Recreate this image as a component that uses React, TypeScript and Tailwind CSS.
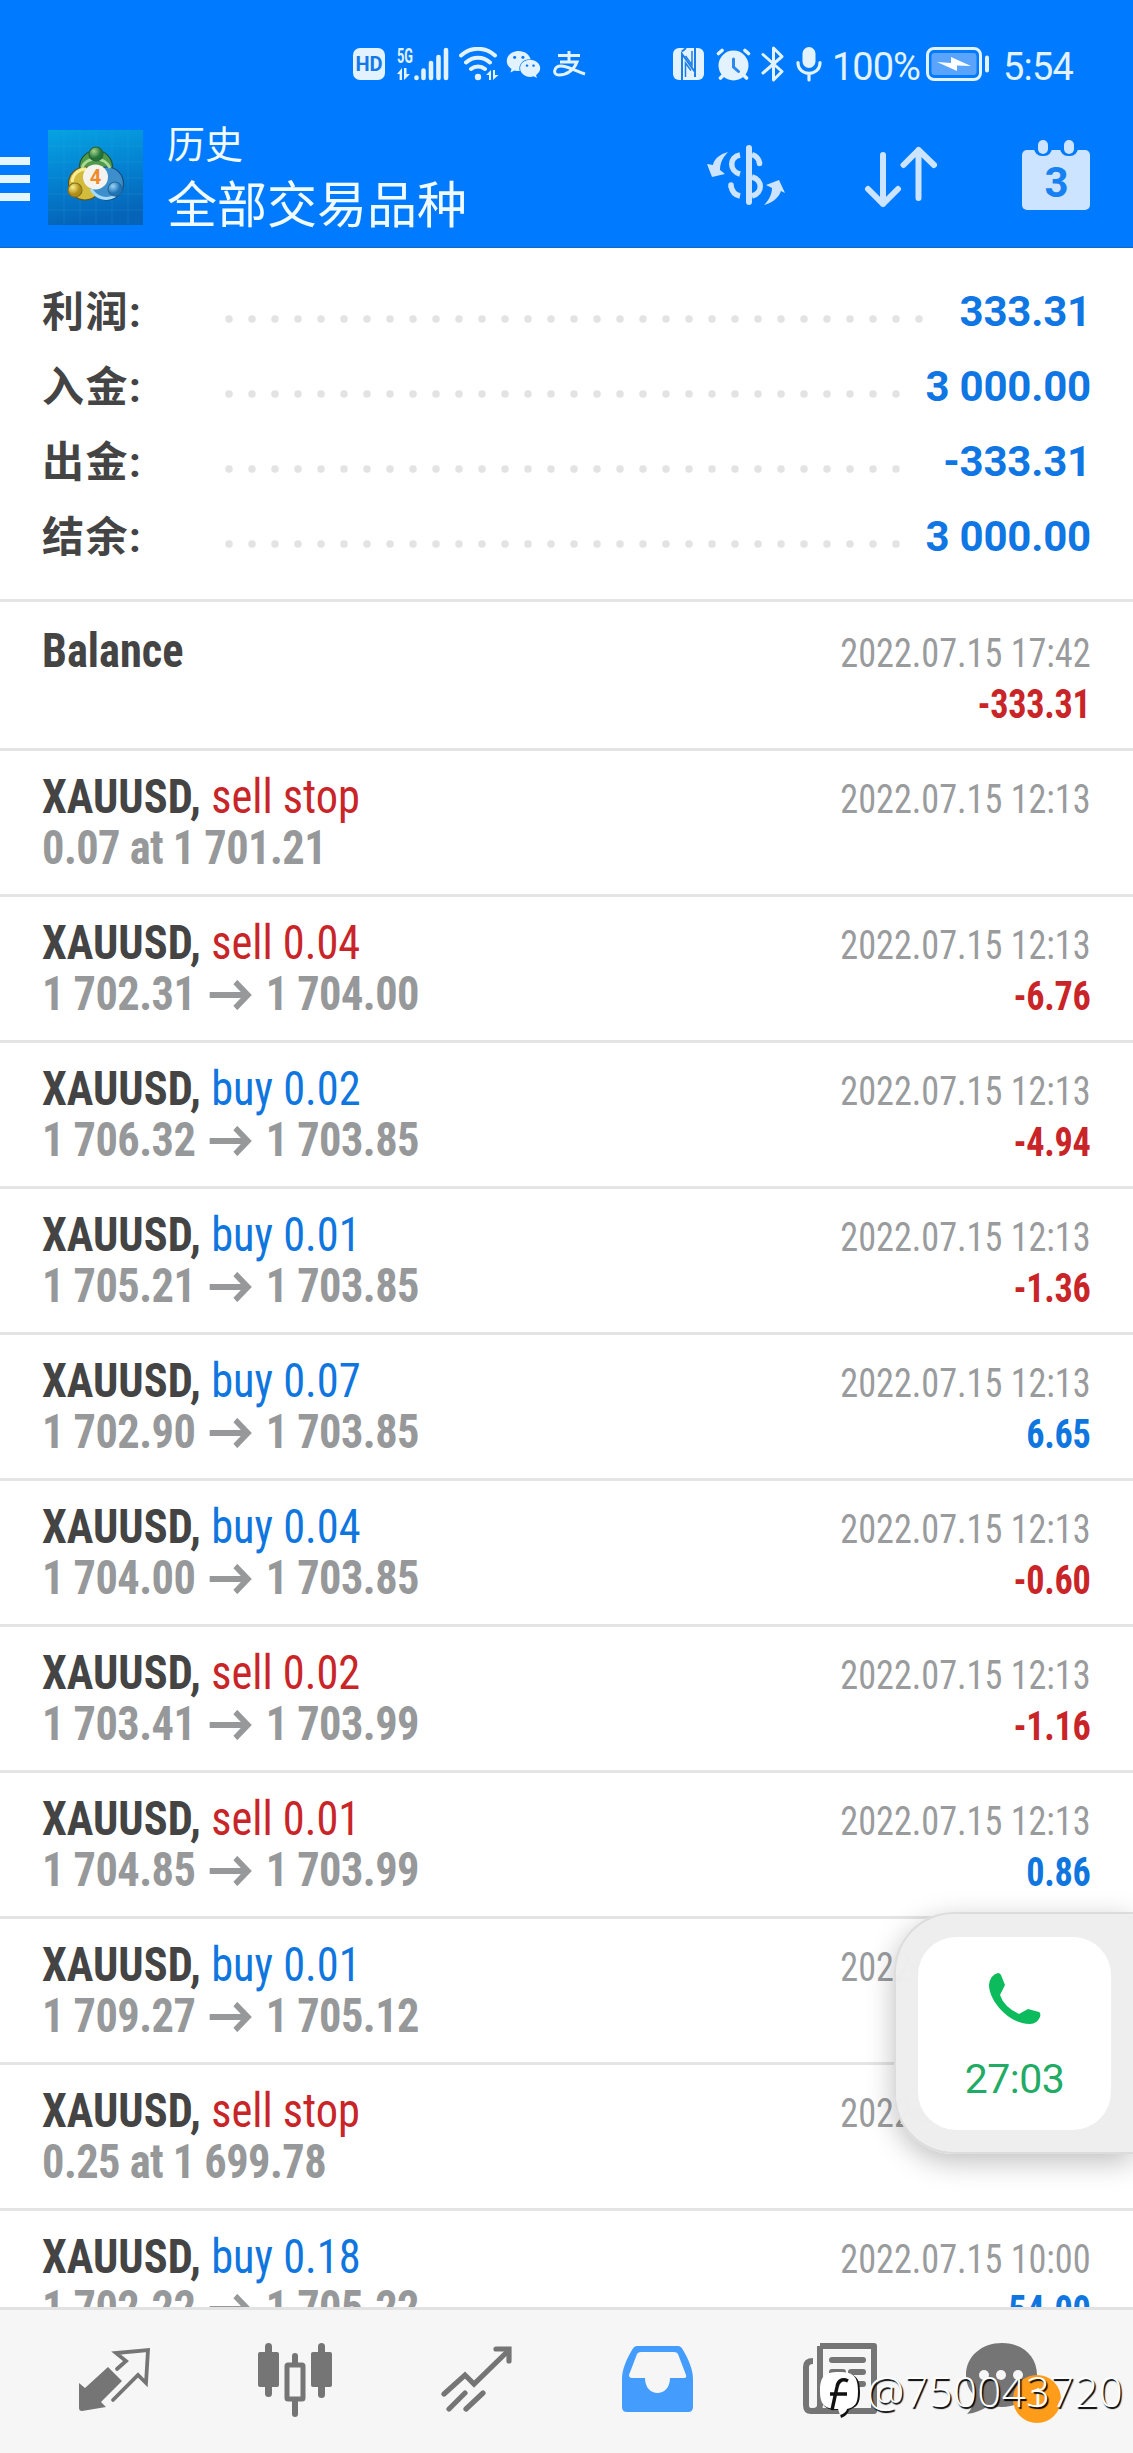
import clsx from 'clsx'
import { FaWeixin } from 'react-icons/fa'

type Deal = {
  symbol: string
  action?: string
  side?: 'buy' | 'sell'
  open?: string
  close?: string
  note?: string
  time: string
  profit?: string
}

const SUMMARY = [
  { label: '利润:', value: '333.31', dots: 31 },
  { label: '入金:', value: '3 000.00', dots: 30 },
  { label: '出金:', value: '-333.31', dots: 30 },
  { label: '结余:', value: '3 000.00', dots: 30 },
]

const DEALS: Deal[] = [
  { symbol: 'Balance', time: '2022.07.15 17:42', profit: '-333.31' },
  { symbol: 'XAUUSD,', action: 'sell stop', side: 'sell', note: '0.07 at 1 701.21', time: '2022.07.15 12:13' },
  { symbol: 'XAUUSD,', action: 'sell 0.04', side: 'sell', open: '1 702.31', close: '1 704.00', time: '2022.07.15 12:13', profit: '-6.76' },
  { symbol: 'XAUUSD,', action: 'buy 0.02', side: 'buy', open: '1 706.32', close: '1 703.85', time: '2022.07.15 12:13', profit: '-4.94' },
  { symbol: 'XAUUSD,', action: 'buy 0.01', side: 'buy', open: '1 705.21', close: '1 703.85', time: '2022.07.15 12:13', profit: '-1.36' },
  { symbol: 'XAUUSD,', action: 'buy 0.07', side: 'buy', open: '1 702.90', close: '1 703.85', time: '2022.07.15 12:13', profit: '6.65' },
  { symbol: 'XAUUSD,', action: 'buy 0.04', side: 'buy', open: '1 704.00', close: '1 703.85', time: '2022.07.15 12:13', profit: '-0.60' },
  { symbol: 'XAUUSD,', action: 'sell 0.02', side: 'sell', open: '1 703.41', close: '1 703.99', time: '2022.07.15 12:13', profit: '-1.16' },
  { symbol: 'XAUUSD,', action: 'sell 0.01', side: 'sell', open: '1 704.85', close: '1 703.99', time: '2022.07.15 12:13', profit: '0.86' },
  { symbol: 'XAUUSD,', action: 'buy 0.01', side: 'buy', open: '1 709.27', close: '1 705.12', time: '2022.07.15 12:13' },
  { symbol: 'XAUUSD,', action: 'sell stop', side: 'sell', note: '0.25 at 1 699.78', time: '2022.07.15 12:13' },
  { symbol: 'XAUUSD,', action: 'buy 0.18', side: 'buy', open: '1 702.22', close: '1 705.22', time: '2022.07.15 10:00', profit: '54.00' },
]

function StatusBar() {
  return (
    <div className="flex h-[128px] items-center text-[#e2f2ff]">
      <div className="ml-[353px] flex h-8 w-8 items-center justify-center rounded-[7px] bg-[#e2f2ff] text-[20px] font-bold text-[#1478ea]">
        HD
      </div>

      {/* 5G signal */}
      <svg className="ml-3 shrink-0 overflow-visible" width="52" height="34" viewBox="0 0 52 34" fill="currentColor">
        <text x="0" y="15.500" fontSize="21" fontWeight="700" textLength="16" lengthAdjust="spacingAndGlyphs">5G</text>
        <path d="M0 27 5 21V33H2.600V27ZM7 21H9.500V27H13L7 33Z" />
        <path d="M19.500 30.500V31M26.500 23.500V31M34 16V31M41.500 10V31M49 3V31" stroke="currentColor" strokeWidth="4.600" strokeLinecap="round" />
      </svg>

      {/* Wi-Fi */}
      <svg className="ml-[10px] shrink-0" width="41" height="34" viewBox="0 0 41 34" fill="none" stroke="currentColor" strokeWidth="4" strokeLinecap="round">
        <path d="M2 8.500C12-.5 26-.5 36 8.500M7 15.500C14 9 24 9 31 15.500M12 22C16 18.500 22 18.500 26 22" />
        <circle cx="19" cy="30" r="3.200" fill="currentColor" stroke="none" />
        <path d="M27 28 32 23V33H30V28ZM34 23H36V28H39.500L34 33Z" fill="currentColor" stroke="none" />
      </svg>

      <FaWeixin className="ml-[6px] shrink-0" size={35} />

      {/* Alipay */}
      <svg className="ml-3 shrink-0" width="34" height="28" viewBox="0 0 34 28" fill="none" stroke="currentColor" strokeWidth="3">
        <path d="M5 5.500H27M16 1V12M7 12H24C21 20 14 25 6 25C-1 25 1 16 8 16C15 16 22 21 32 24" />
      </svg>

      {/* NFC */}
      <svg className="ml-[86px] shrink-0" width="31" height="32" viewBox="0 0 31 32">
        <rect width="31" height="32" rx="6" fill="currentColor" />
        <path d="M9 32V6L22 24V0M9 3.500 13 0M22 25V29" fill="none" stroke="#1a7de8" strokeWidth="2" />
        <path d="M12.500 29V15L18 22.500M19 3V17L12.500 8" fill="none" stroke="#1a7de8" strokeWidth="1.500" />
      </svg>

      {/* Alarm */}
      <svg className="ml-3 shrink-0" width="35" height="34" viewBox="0 0 35 34" fill="currentColor" stroke="currentColor" strokeWidth="3.600" strokeLinecap="round">
        <circle cx="17.500" cy="18.500" r="15" stroke="none" />
        <path d="M2.500 6.500 6 3.500M29 3.500 32.500 6.500M4.500 31 7 28.500M28 28.500 30.500 31" />
        <path d="M17.500 12V20L22.500 24.500" fill="none" stroke="#2d88ee" strokeWidth="3" />
      </svg>

      {/* Bluetooth */}
      <svg className="ml-[10px] shrink-0" width="24" height="38" viewBox="0 0 24 38" fill="none" stroke="currentColor" strokeWidth="3" strokeLinecap="round" strokeLinejoin="round">
        <path d="M2 9.500 21 26.500 12.500 35V3L21 11.500 2 28" />
      </svg>

      {/* Microphone */}
      <svg className="ml-[11px] shrink-0" width="26" height="36" viewBox="0 0 26 36" fill="none" stroke="currentColor" strokeWidth="3.200" strokeLinecap="round">
        <rect x="6.500" y="1" width="13" height="21" rx="6.500" fill="currentColor" stroke="none" />
        <path d="M2 16.500C2 31 24 31 24 16.500M13 27.500V34" />
      </svg>

      <span className="ml-[10px] mt-[5px] w-[88px] text-[38px] leading-none tracking-[-1px]">100%</span>

      <svg className="ml-[6px] shrink-0" width="64" height="34" viewBox="0 0 64 34">
        <rect x="1.500" y="1.500" width="53" height="31" rx="6.500" fill="none" stroke="currentColor" strokeWidth="3" />
        <rect x="5.500" y="6" width="45" height="22" rx="3" fill="#5aa5fb" />
        <path d="M11 15 25 16V10L45 19 31 18.500V24Z" fill="#fff" />
        <rect x="59" y="8.500" width="4" height="17" rx="2" fill="currentColor" />
      </svg>

      <span className="ml-[13px] mt-[5px] text-[38px] leading-none tracking-[-0.8px]">5:54</span>
    </div>
  )
}

function AppLogo() {
  return (
    <svg className="ml-[18px] mt-[2px] shrink-0" width="95" height="95" viewBox="0 0 95 95">
      <defs>
        <linearGradient id="sky" x1="0" y1="0" x2="0.200" y2="1">
          <stop offset="0" stopColor="#06a3e2" />
          <stop offset="0.500" stopColor="#0483d2" />
          <stop offset="1" stopColor="#0564b8" />
        </linearGradient>
        <radialGradient id="green" cx="0.350" cy="0.300">
          <stop offset="0" stopColor="#a6d68b" />
          <stop offset="1" stopColor="#24743a" />
        </radialGradient>
        <radialGradient id="yellow" cx="0.350" cy="0.300">
          <stop offset="0" stopColor="#fbef8b" />
          <stop offset="1" stopColor="#b08d15" />
        </radialGradient>
        <radialGradient id="blue" cx="0.350" cy="0.300">
          <stop offset="0" stopColor="#9bd4f6" />
          <stop offset="1" stopColor="#1f74b8" />
        </radialGradient>
      </defs>
      <rect width="95" height="95" fill="url(#sky)" />
      <path d="M16 0V95M32 0V95M48 0V95M64 0V95M80 0V95M0 16H95M0 32H95M0 48H95M0 64H95M0 80H95" stroke="#3fb4e6" strokeOpacity="0.180" />
      <g strokeWidth="1.200">
        <circle cx="48" cy="37" r="16.500" fill="#4f9a4a" stroke="#1f5531" />
        <circle cx="37" cy="53.500" r="16.500" fill="#d3bb3c" stroke="#5f5218" />
        <circle cx="59" cy="53.500" r="16.500" fill="#3d8fcc" stroke="#174c7c" />
        <path d="M34 38C38 26 57 26 62 38" fill="none" stroke="#a8da95" strokeWidth="3" />
        <path d="M24 52C25 43 32 39 38 39" fill="none" stroke="#f8ec94" strokeWidth="3" />
        <path d="M43 59C48 68 58 71 67 66" fill="none" stroke="#a8dbf7" strokeWidth="3" />
        <circle cx="48" cy="24" r="7" fill="url(#green)" stroke="#27633a" />
        <circle cx="27" cy="60" r="7" fill="url(#yellow)" stroke="#8a7020" />
        <circle cx="67" cy="59" r="7" fill="url(#blue)" stroke="#24689d" />
      </g>
      <circle cx="47.500" cy="47" r="12.500" fill="#f4f3f0" />
      <text x="47.500" y="54" textAnchor="middle" fontSize="20" fontWeight="700" fill="#ee8a2b">4</text>
    </svg>
  )
}

function Toolbar() {
  return (
    <div className="flex h-[119px] items-center pb-[22px] text-[#cce4ff]">
      <div className="mt-1 flex w-[30px] flex-col gap-[10px]">
        <div className="h-2 bg-[#e5f6ff]" />
        <div className="h-2 bg-[#e5f6ff]" />
        <div className="h-2 bg-[#e5f6ff]" />
      </div>
      <AppLogo />
      <div className="ml-[24px] mt-[4px] w-[310px] text-[#f0fbff]">
        <div className="text-[38px] leading-9">历史</div>
        <div className="mt-[18px] text-[50px] leading-[50px]">全部交易品种</div>
      </div>

      {/* Symbol filter */}
      <svg className="-mt-[3px] ml-[230px] shrink-0" width="78" height="60" viewBox="0 0 78 60" fill="none" stroke="currentColor" strokeWidth="5.500">
        <path d="M42 3V57" strokeWidth="6" strokeLinecap="round" />
        <path d="M33 10C22 12 22 26 33 29M24 41C25 47 28 50 33 51" />
        <path d="M45 9.500C49 11 52 14 52.500 18M45 32C56 35 56 48 45 51" />
        <path d="M24 40V41M52.500 18V18.500" strokeLinecap="round" />
        <path d="M21 7C13 9 7 14 6 20L0 19 5 32 18 29 13 25C13 18 16 12 21 7ZM57 60C66 58 72 52 74 46L78 48 72 35 59 40 65 43C65 50 61 56 57 60Z" fill="currentColor" stroke="none" />
      </svg>

      {/* Sort */}
      <svg className="ml-[79px] shrink-0" width="74" height="64" viewBox="0 0 74 64" fill="none" stroke="currentColor" strokeWidth="6" strokeLinecap="round" strokeLinejoin="round">
        <path d="M19 10V59M4 44 19 59 34 44M54.500 53V5M39.500 20 54.500 5 70 20" />
      </svg>

      {/* Calendar */}
      <svg className="-mt-[3px] ml-[84px] shrink-0" width="68" height="70" viewBox="0 0 68 70" fill="currentColor">
        <rect y="10" width="68" height="60" rx="5" />
        <rect x="12" y="-4" width="18" height="20" rx="8" fill="#007aff" />
        <rect x="38" y="-4" width="18" height="20" rx="8" fill="#007aff" />
        <rect x="16" y="0" width="10" height="14" rx="5" />
        <rect x="42" y="0" width="10" height="14" rx="5" />
        <text x="34.500" y="57" textAnchor="middle" fontSize="42" fontWeight="700" fill="#1780f2">3</text>
      </svg>
    </div>
  )
}

function Summary() {
  return (
    <section className="h-[354px] shrink-0 border-b-[3px] border-[#e4e4e4] pt-[26px]">
      {SUMMARY.map((row) => (
        <div key={row.label} className="flex h-[75px] items-center px-[42px] text-[42px] font-bold">
          <span className="mt-[2px] w-[183px] tracking-[1.5px] text-[#444]">{row.label}</span>
          <svg className="mt-[14px] shrink-0" width="700" height="8" viewBox="0 0 700 8">
            <line
              x1="4"
              y1="4"
              x2={4 + (row.dots - 1) * 23 + 0.1}
              y2="4"
              stroke="#e3e3e3"
              strokeWidth="7.500"
              strokeLinecap="round"
              strokeDasharray="0 23"
            />
          </svg>
          <span className="-ml-10 flex-1 whitespace-nowrap text-right tracking-[-0.2px] text-[#0f76e4]">{row.value}</span>
        </div>
      ))}
    </section>
  )
}

function PriceArrow() {
  return (
    <svg className="ml-[15px] mr-[15px] mt-[3px] inline-block shrink-0" width="46" height="30" viewBox="0 0 46 30" fill="none" stroke="currentColor" strokeWidth="6">
      <path d="M0 15H42M28 2 41.500 15 28 28" />
    </svg>
  )
}

function DealRow({ deal }: { deal: Deal }) {
  return (
    <li className="flex h-[146px] shrink-0 justify-between border-t-[3px] border-[#e4e4e4] px-[42px] font-['Roboto_Condensed','Roboto'] leading-[51px] [font-stretch:75%] first:border-transparent">
      <div className="origin-left scale-x-[0.925] pt-5 text-[48px]">
        <div className="flex gap-[11px]">
          <span className="font-bold text-[#444]">{deal.symbol}</span>
          <span className={clsx(deal.side === 'buy' ? 'text-[#0f76e0]' : 'text-[#c92528]')}>{deal.action}</span>
        </div>
        <div className="flex items-center font-bold tracking-[-0.6px] text-[#96989a]">
          {deal.note}
          {deal.open && (
            <>
              <span>{deal.open}</span>
              <PriceArrow />
              <span>{deal.close}</span>
            </>
          )}
        </div>
      </div>
      <div className="origin-right scale-x-[0.905] pt-[23px] text-right text-[40px]">
        <div className="text-[#999b9d]">{deal.time}</div>
        <div className={clsx('font-bold tracking-[-0.3px]', deal.profit?.startsWith('-') ? 'text-[#c92528]' : 'text-[#0f76e0]')}>{deal.profit}</div>
      </div>
    </li>
  )
}

function CallWidget() {
  return (
    <div className="absolute right-0 top-[1912px] flex h-[242px] w-[239px] items-center rounded-l-[60px] border-2 border-r-0 border-[#dcdcdc] bg-[#ededed]/95 pl-[22px] shadow-[0_8px_28px_rgba(0,0,0,0.25)] backdrop-blur-md">
      <div className="flex h-[193px] w-[193px] flex-col items-center rounded-[38px] bg-white pt-[36px]">
        <svg width="52" height="52" viewBox="0 0 52 52" fill="#0bbb5c">
          <path d="M9 0Q11 0 12 2L16 12 11 22Q15 34 30 41L39 36 50 39Q52 40 51 44Q48 51 41 51C20 51 0 28 0 12Q1 2 9 0Z" />
        </svg>
        <span className="mt-[30px] text-[41px] leading-[48px] tracking-[-0.5px] text-[#22ab64]">27:03</span>
      </div>
    </div>
  )
}

function BottomNav() {
  return (
    <nav className="flex h-[146px] shrink-0 border-t-[3px] border-[#e2e2e2] bg-[#f6f6f6] pt-[33px] text-[#757575]">
      {/* Quotes */}
      <svg className="ml-[79px] mt-1 shrink-0" width="72" height="66" viewBox="0 0 72 66" fill="none" stroke="currentColor" strokeWidth="3.800">
        <path d="M0 36 6 41 29 20 43 34 22 55 27 60 3 64Q0 64 0 61Z" fill="currentColor" stroke="none" />
        <path d="M38 22 47 14 37 6 69 3 67 36 59 28 34 53" strokeLinecap="round" />
      </svg>

      {/* Charts */}
      <svg className="ml-[107px] shrink-0" width="74" height="74" viewBox="0 0 74 74" fill="currentColor">
        <rect y="9" width="21" height="35" rx="2" />
        <rect x="7" width="7" height="54" rx="3.500" />
        <rect x="53" y="9" width="21" height="35" rx="2" />
        <rect x="60" width="7" height="55" rx="3.500" />
        <rect x="34" y="10" width="6" height="64" rx="3" />
        <rect x="29" y="22" width="16" height="34" rx="1" fill="#f6f6f6" stroke="currentColor" strokeWidth="5" />
      </svg>

      {/* Trade */}
      <svg className="ml-[109px] mt-[3px] shrink-0" width="72" height="67" viewBox="0 0 72 67" fill="none" stroke="currentColor" strokeWidth="5.200" strokeLinecap="round">
        <path d="M3 48 24 29 33 38 67 5M8 63 24 47M25 63 42 47" />
        <path d="M55 3H68V15" />
      </svg>

      {/* History */}
      <svg className="ml-[109px] mt-[3px] shrink-0" width="71" height="66" viewBox="0 0 71 66">
        <path
          d="M15 0H56Q59 0 61 4C67 14 71 24 71 33V61Q71 66 66 66H5Q0 66 0 61V33C0 24 4 14 10 4Q12 0 15 0ZM19 6Q16 6 15 8L7 29Q7 32 10 32H23C23 52 48 52 48 32H62Q65 32 64 29L56 8Q55 6 52 6Z"
          fill="#449cfd"
          fillRule="evenodd"
        />
      </svg>

      {/* News */}
      <svg className="ml-[110px] shrink-0" width="74" height="71" viewBox="0 0 74 71" fill="none" stroke="currentColor" strokeWidth="6">
        <path d="M17 3H71V68H8Q3 68 3 62V24Q3 18 10 18M17 3V62Q17 68 10 68" strokeLinejoin="round" />
        <path d="M29 17H60M29 29H40M48 29H60M29 41H40M48 41H60" strokeLinecap="round" />
      </svg>

      {/* Messages */}
      <div className="relative ml-[89px]">
        <svg className="shrink-0" width="72" height="71" viewBox="0 0 72 71" fill="currentColor">
          <path d="M36 0C56 0 71 13 71 32S56 64 36 64C30 64 26 63 23 62C17 67 9 70 1 71C6 66 9 59 8 52C3 47 0 40 0 32C0 13 16 0 36 0Z" />
          <g fill="#f6f6f6">
            <circle cx="18" cy="32" r="5" />
            <circle cx="35" cy="32" r="5" />
            <circle cx="52" cy="32" r="5" />
          </g>
        </svg>
        <div className="absolute left-[47px] top-[32px] flex h-12 w-12 items-center justify-center rounded-full bg-[#ff9c1a] text-[28px] text-white">
          1
        </div>
      </div>
    </nav>
  )
}

function AuthorTag() {
  return (
    <div className="absolute bottom-[35px] right-[10px] flex items-center text-white">
      <svg width="42" height="46" viewBox="0 0 42 46">
        <path d="M20 1C36 1 40 6 40 20C40 32 37 35 29 38Q28 43 21 46L19 38C4 38 1 33 1 20C1 6 5 1 20 1Z" fill="#111" />
        <path d="M19 0C34 0 38 5 38 19C38 32 35 35 27 37Q26 41 20 43L18 37C4 37 0 32 0 19C0 5 4 0 19 0Z" fill="#fff" />
        <path d="M28 9C22 6 18 9 17 15L12 38M10 22H27" fill="none" stroke="#111" strokeWidth="3.500" />
      </svg>
      <span className="-mt-[9px] ml-[5px] font-['Open_Sans'] text-[42px] font-light leading-[52px] tracking-[0.3px] [text-shadow:1.5px_1.5px_1px_#000]">@750043720</span>
    </div>
  )
}

export default function App() {
  return (
    <div className="relative flex h-[2453px] w-[1133px] flex-col overflow-hidden bg-white font-['Roboto','Noto_Sans_CJK_SC',sans-serif]">
      <header className="h-[248px] shrink-0 border-b border-[#1668c0] bg-[#007aff]">
        <StatusBar />
        <Toolbar />
      </header>
      <main className="flex min-h-0 flex-1 flex-col overflow-hidden">
        <Summary />
        <ul className="-mt-[3px] flex flex-col pt-[3px]">
          {DEALS.map((deal, i) => (
            <DealRow key={i} deal={deal} />
          ))}
        </ul>
      </main>
      <BottomNav />
      <CallWidget />
      <AuthorTag />
    </div>
  )
}
